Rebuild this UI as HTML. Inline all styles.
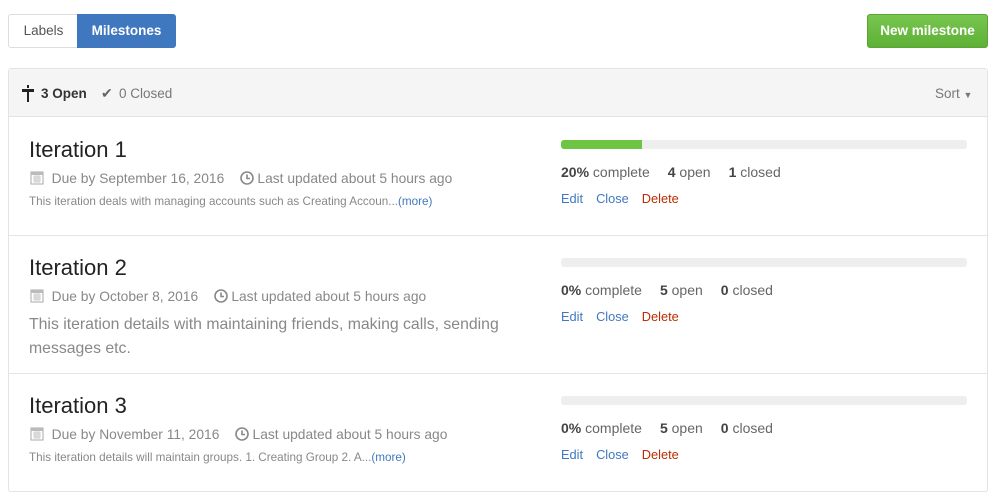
<!DOCTYPE html>
<html><head><meta charset="utf-8"><style>
*{margin:0;padding:0;box-sizing:border-box}
body{width:1001px;height:504px;background:#fff;font-family:"Liberation Sans",sans-serif;position:relative;overflow:hidden;color:#333}
.a{position:absolute;white-space:nowrap}
.btn{position:absolute;height:34px;font-size:13.5px;line-height:32px;text-align:center}
.title{font-size:22px;color:#222;left:29px}
.meta{font-size:13.8px;color:#888;left:30px}
.desc{font-size:11.7px;color:#888;left:29px}
.lnk{color:#4078c0}
.bar{position:absolute;left:561px;width:406px;height:9px;background:#eee;border-radius:3px;overflow:hidden}
.stats{font-size:14px;color:#666;left:561px}
.stats b{color:#444}
.stats span{margin-right:18px}
.acts{font-size:12.8px;left:561px;color:#4078c0}
.acts span{margin-right:13px}
.row{position:absolute;left:8px;width:979px;border-top:1px solid #e5e5e5}
</style></head><body>
<div class="btn" style="left:8px;top:14px;width:70px;border:1px solid #ddd;border-right:none;border-radius:3px 0 0 3px;color:#555">Labels</div>
<div class="btn" style="left:77px;top:14px;width:99px;background:#4078c0;color:#fff;font-weight:bold;border-radius:0 3px 3px 0;line-height:34px">Milestones</div>
<div class="btn" style="left:867px;top:14px;width:121px;background:linear-gradient(#78c650,#5eb036);border:1px solid #5aa534;border-radius:3px;color:#fff;font-weight:bold">New milestone</div>

<div style="position:absolute;left:8px;top:68px;width:980px;height:424px;border:1px solid #e3e3e3;border-radius:3px"></div>
<div style="position:absolute;left:9px;top:69px;width:978px;height:48px;background:#f5f5f5;border-bottom:1px solid #e3e3e3"></div>
<svg class="a" style="left:21px;top:85px" width="14" height="17" viewBox="0 0 14 17"><rect x="6" y="0" width="2" height="3" fill="#222"/><rect x="1" y="4" width="12" height="3" fill="#222"/><rect x="6" y="7" width="2" height="10" fill="#222"/></svg>
<div class="a" style="left:41px;top:86px;font-size:13.5px;font-weight:bold;color:#333">3 Open</div>
<div class="a" style="left:101px;top:85px;font-size:14px;color:#666">✔</div>
<div class="a" style="left:119px;top:86px;font-size:13.5px;color:#777">0 Closed</div>
<div class="a" style="left:935px;top:86px;font-size:13.5px;color:#777">Sort <span style="font-size:9px">▼</span></div>

<div class="row" style="top:235px"></div>
<div class="row" style="top:373px"></div>

<!-- row 1 -->
<div class="a title" style="top:137px">Iteration 1</div>
<div class="a meta" style="top:170px"><svg width="14" height="15" viewBox="0 0 14 15" style="vertical-align:-2px"><rect x="1" y="2" width="12" height="12" fill="none" stroke="#aaa"/><rect x="1" y="2" width="12" height="3" fill="#bbb"/><path d="M3 7h8M3 9h8M3 11h8M5 5v8M7 5v8M9 5v8" stroke="#ccc"/></svg>&nbsp; Due by September 16, 2016 &nbsp;&nbsp; <svg width="14" height="14" viewBox="0 0 14 14" style="vertical-align:-2px"><circle cx="7" cy="7" r="6" fill="none" stroke="#888" stroke-width="1.6"/><path d="M7 3.5V7.5H10" fill="none" stroke="#888" stroke-width="1.6"/></svg> Last updated about 5 hours ago</div>
<div class="a desc" style="top:195px">This iteration deals with managing accounts such as Creating Accoun...<span class="lnk">(more)</span></div>
<div class="bar" style="top:140px"><div style="width:81px;height:9px;background:#6cc644"></div></div>
<div class="a stats" style="top:164px"><span><b>20%</b> complete</span><span><b>4</b> open</span><span><b>1</b> closed</span></div>
<div class="a acts" style="top:191px"><span>Edit</span><span>Close</span><span style="color:#bd2c00">Delete</span></div>

<!-- row 2 -->
<div class="a title" style="top:255px">Iteration 2</div>
<div class="a meta" style="top:288px"><svg width="14" height="15" viewBox="0 0 14 15" style="vertical-align:-2px"><rect x="1" y="2" width="12" height="12" fill="none" stroke="#aaa"/><rect x="1" y="2" width="12" height="3" fill="#bbb"/><path d="M3 7h8M3 9h8M3 11h8M5 5v8M7 5v8M9 5v8" stroke="#ccc"/></svg>&nbsp; Due by October 8, 2016 &nbsp;&nbsp; <svg width="14" height="14" viewBox="0 0 14 14" style="vertical-align:-2px"><circle cx="7" cy="7" r="6" fill="none" stroke="#888" stroke-width="1.6"/><path d="M7 3.5V7.5H10" fill="none" stroke="#888" stroke-width="1.6"/></svg> Last updated about 5 hours ago</div>
<div class="a" style="left:29px;top:313px;font-size:15.8px;color:#888;line-height:24px">This iteration details with maintaining friends, making calls, sending<br>messages etc.</div>
<div class="bar" style="top:258px"></div>
<div class="a stats" style="top:282px"><span><b>0%</b> complete</span><span><b>5</b> open</span><span><b>0</b> closed</span></div>
<div class="a acts" style="top:309px"><span>Edit</span><span>Close</span><span style="color:#bd2c00">Delete</span></div>

<!-- row 3 -->
<div class="a title" style="top:393px">Iteration 3</div>
<div class="a meta" style="top:426px"><svg width="14" height="15" viewBox="0 0 14 15" style="vertical-align:-2px"><rect x="1" y="2" width="12" height="12" fill="none" stroke="#aaa"/><rect x="1" y="2" width="12" height="3" fill="#bbb"/><path d="M3 7h8M3 9h8M3 11h8M5 5v8M7 5v8M9 5v8" stroke="#ccc"/></svg>&nbsp; Due by November 11, 2016 &nbsp;&nbsp; <svg width="14" height="14" viewBox="0 0 14 14" style="vertical-align:-2px"><circle cx="7" cy="7" r="6" fill="none" stroke="#888" stroke-width="1.6"/><path d="M7 3.5V7.5H10" fill="none" stroke="#888" stroke-width="1.6"/></svg> Last updated about 5 hours ago</div>
<div class="a desc" style="top:451px">This iteration details will maintain groups. 1. Creating Group 2. A...<span class="lnk">(more)</span></div>
<div class="bar" style="top:396px"></div>
<div class="a stats" style="top:420px"><span><b>0%</b> complete</span><span><b>5</b> open</span><span><b>0</b> closed</span></div>
<div class="a acts" style="top:447px"><span>Edit</span><span>Close</span><span style="color:#bd2c00">Delete</span></div>
</body></html>
